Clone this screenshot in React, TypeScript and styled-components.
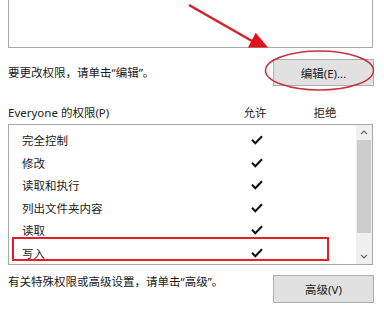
import styled, { createGlobalStyle } from "styled-components";

const GlobalStyle = createGlobalStyle`
    * { box-sizing: border-box; }
    html, body {
        margin: 0;
        padding: 0;
        background: #ffffff;
    }
    body {
        font-family: "Noto Sans", "Noto Sans CJK SC", sans-serif;
        font-size: 11.5px;
        color: #1a1a1a;
    }
`;

const Page = styled.div`
    position: relative;
    width: 384px;
    height: 310px;
    overflow: hidden;
    padding: 0 11px 0 8px;
`;

const TopBox = styled.div`
    height: 48px;
    border: 1px solid #a8a8a8;
    border-top: none;
    background: #fff;
`;

const ActionRow = styled.div<{ $top: number; $align: string }>`
    display: flex;
    justify-content: space-between;
    align-items: ${(p) => p.$align};
    margin-top: ${(p) => p.$top}px;
`;

const Label = styled.span`
    line-height: 14px;
    white-space: nowrap;
`;

const Button = styled.button<{ $h: number }>`
    width: 101px;
    height: ${(p) => p.$h}px;
    margin-right: -1px;
    background: #e1e1e1;
    border: 1px solid #adadad;
    border-radius: 0;
    font-family: inherit;
    font-size: 11.5px;
    color: #1a1a1a;
    padding: 0;
`;

const Header = styled.div`
    display: grid;
    grid-template-columns: 202px 50px 50px;
    column-gap: 20px;
    align-items: center;
    height: 20px;
    margin-top: 16px;
`;

const HeadCell = styled.span<{ $center?: boolean }>`
    text-align: ${(p) => (p.$center ? "center" : "left")};
    white-space: nowrap;
`;

const List = styled.div`
    position: relative;
    display: flex;
    height: 141px;
    margin-top: 2px;
    border: 1px solid #a8a8a8;
    background: #fff;
`;

const Rows = styled.div`
    flex: 1;
    padding-top: 4px;
`;

const Row = styled.div`
    display: grid;
    grid-template-columns: 215px 40px;
    align-items: center;
    height: 22.5px;
    padding-left: 13px;
`;

const Check = styled.span`
    display: flex;
    justify-content: center;
`;

const ScrollBar = styled.div`
    width: 16px;
    display: flex;
    flex-direction: column;
    background: #f0f0f0;
`;

const ArrowButton = styled.div`
    height: 15px;
    display: flex;
    align-items: center;
    justify-content: center;
`;

const Track = styled.div`
    flex: 1;
    display: flex;
    flex-direction: column;
    padding: 0 1px;
`;

const Thumb = styled.div`
    height: 93px;
    background: #cdcdcd;
`;

const Highlight = styled.div`
    position: absolute;
    left: 3px;
    top: 112px;
    width: 317px;
    height: 24px;
    border: 2.5px solid #e41d26;
`;

const Annotations = styled.svg`
    position: absolute;
    left: 0;
    top: 0;
    pointer-events: none;
`;

const perms = ["完全控制", "修改", "读取和执行", "列出文件夹内容", "读取", "写入"];

function Tick() {
    return (
        <svg width="12" height="10" viewBox="0 0 12 10">
            <polyline points="1,4.8 4.3,8.3 11,1.2" fill="none" stroke="#111" strokeWidth="2" />
        </svg>
    );
}

function Chevron({ up }: { up?: boolean }) {
    return (
        <svg width="8" height="5" viewBox="0 0 8 5">
            <polyline
                points={up ? "1,4.2 4,1.2 7,4.2" : "1,0.8 4,3.8 7,0.8"}
                fill="none"
                stroke="#606060"
                strokeWidth="1.2"
            />
        </svg>
    );
}

export default function App() {
    return (
        <>
            <GlobalStyle />
            <Page>
                <TopBox />
                <ActionRow $top={11} $align="center">
                    <Label>要更改权限，请单击“编辑”。</Label>
                    <Button $h={27}>编辑(E)...</Button>
                </ActionRow>
                <Header>
                    <HeadCell>Everyone 的权限(P)</HeadCell>
                    <HeadCell $center>允许</HeadCell>
                    <HeadCell $center>拒绝</HeadCell>
                </Header>
                <List>
                    <Rows>
                        {perms.map((p) => (
                            <Row key={p}>
                                <span>{p}</span>
                                <Check>
                                    <Tick />
                                </Check>
                            </Row>
                        ))}
                    </Rows>
                    <ScrollBar>
                        <ArrowButton>
                            <Chevron up />
                        </ArrowButton>
                        <Track>
                            <Thumb />
                        </Track>
                        <ArrowButton>
                            <Chevron />
                        </ArrowButton>
                    </ScrollBar>
                    <Highlight />
                </List>
                <ActionRow $top={10} $align="flex-start">
                    <Label>有关特殊权限或高级设置，请单击“高级”。</Label>
                    <Button $h={28}>高级(V)</Button>
                </ActionRow>
                <Annotations width="384" height="310" viewBox="0 0 384 310">
                    <defs>
                        <clipPath id="above-box">
                            <rect x="0" y="0" width="384" height="47.5" />
                        </clipPath>
                    </defs>
                    <g clipPath="url(#above-box)">
                        <line x1="189" y1="5" x2="252" y2="41" stroke="#d4202a" strokeWidth="2.4" />
                        <polygon points="271,51 247.3,48.8 255.7,32.8" fill="#e0121c" />
                    </g>
                    <ellipse cx="319.5" cy="70.5" rx="54" ry="19.5" fill="none" stroke="#c8323e" strokeWidth="1.5" />
                </Annotations>
            </Page>
        </>
    );
}
